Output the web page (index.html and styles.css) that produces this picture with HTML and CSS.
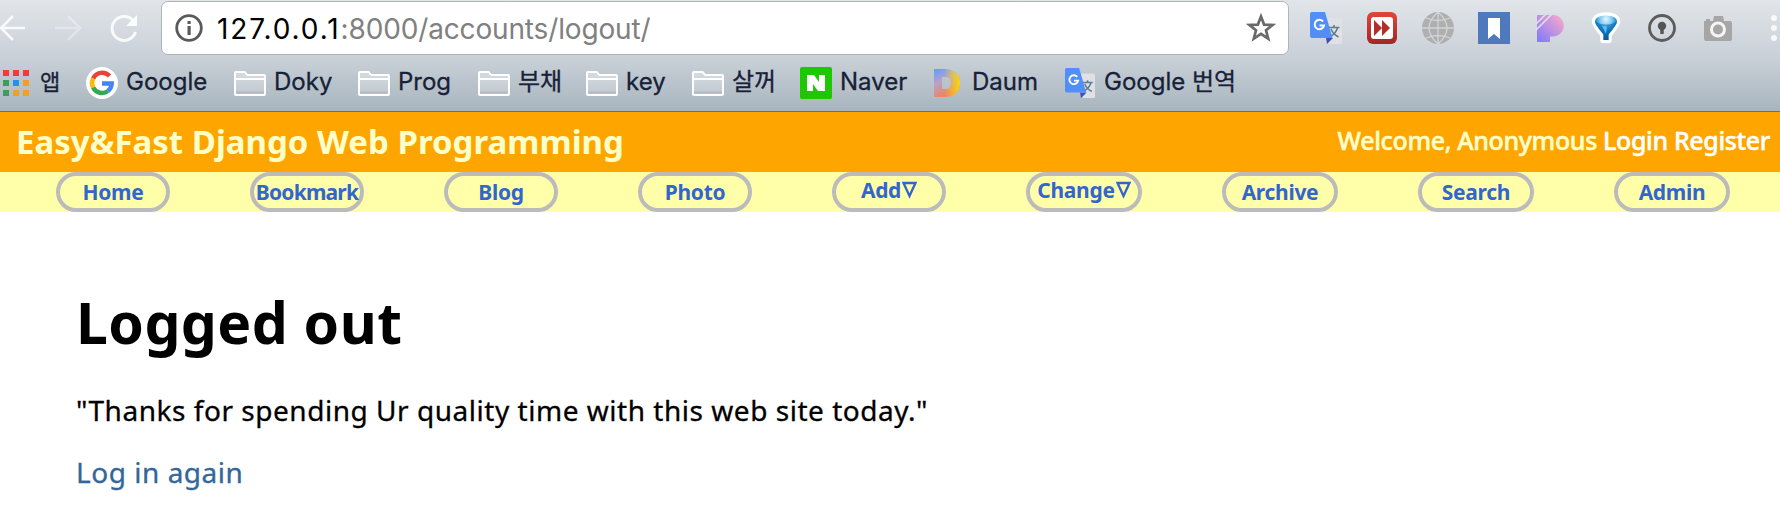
FILE: index.html
```html
<!DOCTYPE html>
<html lang="ko">
<head>
<meta charset="utf-8">
<title>Logged out</title>
<link rel="stylesheet" href="styles.css">
</head>
<body>
<svg class="defs" width="0" height="0">
  <defs>
    <linearGradient id="paper" x1="0" y1="0" x2="0" y2="1"><stop offset="0" stop-color="#d5dbe1"/><stop offset="1" stop-color="#c0c9d0"/></linearGradient>
    <symbol id="folder" viewBox="0 0 32 32"><path d="M1 28V6q0-1 1-1h8q1 0 1.600 1l1 1.500q.4.5 1 .500H30q1 0 1 1V27q0 1-1 1H2q-1 0-1-1z" fill="url(#paper)" stroke="#fff" stroke-width="2"/><path d="M2 12h28" stroke="#fff" stroke-width="2"/><path d="M2 25.500h28" stroke="#b3b9c3" stroke-width="2"/></symbol>
    <symbol id="translate" viewBox="0 0 32 32"><path d="M12 6h18q2 0 2 2v22q0 2-2 2H19z" fill="#dfe1e4"/><path d="M18.500 15.500h11M24 13v2.500M27.500 16q-2 6-8 9M21 17q2 5 7.500 8" fill="none" stroke="#607d8b" stroke-width="1.600"/><path d="M16 26h7l-6 6z" fill="#3f51b5"/><path d="M2 0h13l7.500 26H2q-2 0-2-2V2q0-2 2-2z" fill="#518ef8"/><path d="M13 9.500a4.700 4.700 0 1 0 1 4H9.500" fill="none" stroke="#fff" stroke-width="2"/></symbol>
  </defs>
</svg>
<div class="browser">
  <div class="toolbar">
    <div class="controls">
      <svg width="26" height="28" viewBox="0 0 26 28"><path d="M25 14H1M13 2 1 14l12 12" fill="none" stroke="#fff" stroke-width="2.600" opacity=".85"/></svg>
      <svg width="28" height="28" viewBox="0 0 28 28"><path d="M1 14h24M14 2l12 12-12 12" fill="none" stroke="#fff" stroke-width="2.600" opacity=".3"/></svg>
      <svg width="28" height="28" viewBox="0 0 28 28"><path d="M23.500 7A12 12 0 1 0 25.500 18" fill="none" stroke="#fff" stroke-width="3" opacity=".85"/><path d="M27 1v11H16z" fill="#fff" opacity=".9"/></svg>
    </div>
    <div class="address">
      <svg width="28" height="28" viewBox="0 0 28 28"><circle cx="14" cy="14" r="12.300" fill="none" stroke="#5a5a5a" stroke-width="2.800"/><path d="M12.500 7h3.200v3h-3.200zM12.500 12h3.200v9h-3.200z" fill="#5a5a5a"/></svg>
      <div class="url"><span class="host">127.0.0.1</span><span class="path">:8000/accounts/logout/</span></div>
      <svg class="star" width="30" height="30" viewBox="0 0 30 30"><path d="M15 3.500l3.100 8.100 8.500.4-6.600 5.300 2.200 8.300-7.200-4.700-7.200 4.700 2.200-8.300L3.400 12l8.500-.4z" fill="none" stroke="#6a6a6a" stroke-width="2.700"/></svg>
    </div>
    <div class="extensions">
      <svg viewBox="0 0 32 32"><use href="#translate"/></svg>
      <svg viewBox="0 0 32 32"><defs><linearGradient id="red" x1="0" y1="0" x2="0" y2="1"><stop offset="0" stop-color="#e0473d"/><stop offset="1" stop-color="#a52622"/></linearGradient></defs><rect x="1" y="0" width="30" height="32" rx="6" fill="url(#red)"/><rect x="5" y="5" width="22" height="22" rx="3" fill="#fff"/><path d="M8 8l8 8-8 8zM16 8l8 8-8 8z" fill="#b22e29"/></svg>
      <svg viewBox="0 0 32 32"><circle cx="16" cy="16" r="16" fill="#afafaf"/><path d="M0 16h32M16 0v32M4 6q12 5 24 0M4 26q12-5 24 0M16 0Q-2 16 16 32M16 0q18 16 0 32" fill="none" stroke="#d2d4d6" stroke-width="1.300"/></svg>
      <svg viewBox="0 0 32 32"><rect width="32" height="32" fill="#4f79bd"/><path d="M10 6h12v21l-6-5-6 5z" fill="#fff"/></svg>
      <svg viewBox="0 0 32 32"><defs><linearGradient id="pink" x1="0" y1="1" x2="1" y2="0"><stop offset=".1" stop-color="#8a7df8"/><stop offset="1" stop-color="#ffacc5"/></linearGradient></defs><path d="M3 3h16a10.500 10.500 0 0 1 0 21.500h-3V30H3z" fill="url(#pink)"/><path d="M2 12 12 2M2 18 18 2" stroke="#dfe2e7" stroke-width="1.600"/></svg>
      <svg viewBox="0 0 32 32"><defs><radialGradient id="gem" cx=".5" cy=".15" r=".8"><stop offset="0" stop-color="#e8f8ff"/><stop offset=".35" stop-color="#7cc8f2"/><stop offset=".6" stop-color="#128bd6"/><stop offset="1" stop-color="#064a8a"/></radialGradient></defs><path d="M16 3.500Q5 4 5 9.500q0 3 8.500 13V28h5v-5.500Q27 12.500 27 9.500 27 4 16 3.500z" fill="#fff" stroke="#fff" stroke-width="6.500" stroke-linejoin="round"/><path d="M16 3.500Q5 4 5 9.500q0 3 8.500 13V28h5v-5.500Q27 12.500 27 9.500 27 4 16 3.500z" fill="url(#gem)"/><path d="M5 9.500Q16 16 27 9.500q0 3-8.500 13V28h-5v-5.500Q5 12.500 5 9.500z" fill="#0767ad" opacity=".6"/><path d="M12 13.500q3 1 5 .5l-1 8z" fill="#5cc0f5"/></svg>
      <svg viewBox="0 0 32 32"><circle cx="16" cy="16" r="12.500" fill="none" stroke="#5c5c5c" stroke-width="2.800"/><circle cx="16" cy="14" r="4.200" fill="#555"/><path d="M14.300 14h3.400v8h-3.400z" fill="#555"/></svg>
      <svg viewBox="0 0 32 32"><path d="M2 9h2V7h4v2h3l1-5h9l1 5h6q2 0 2 2v16q0 2-2 2H4q-2 0-2-2z" fill="#a6a6a6"/><circle cx="16" cy="17.500" r="6.500" fill="#a6a6a6" stroke="#f5f5f5" stroke-width="3"/></svg>
      <svg viewBox="0 0 32 32"><g fill="#fff" opacity=".85"><circle cx="16" cy="6" r="3"/><circle cx="16" cy="16" r="3"/><circle cx="16" cy="26" r="3"/></g></svg>
    </div>
  </div>
  <div class="bookmarks">
    <div class="mark apps"><svg viewBox="0 0 32 32"><path d="M0 3h6v6H0zM10 3h6v6h-6zM20 3h6v6h-6z" fill="#f33b36"/><path d="M0 13h6v6H0zM0 23h6v6H0z" fill="#3c9e59"/><path d="M10 13h6v6h-6z" fill="#2b8ef3"/><path d="M20 13h6v6h-6zM10 23h6v6h-6zM20 23h6v6h-6z" fill="#f0a023"/></svg><span>앱</span></div>
    <div class="mark google"><svg viewBox="0 0 32 32"><circle cx="16" cy="16" r="16" fill="#fff"/><g fill="none" stroke-width="4.500"><path d="M23.500 9A10 10 0 0 0 7.100 11.500" stroke="#ea4335"/><path d="M7.100 11.500a10 10 0 0 0 0 9" stroke="#fbbc05"/><path d="M7.100 20.500A10 10 0 0 0 22 24" stroke="#34a853"/><path d="M22 24q3.500-3 3.700-7.500H16" stroke="#4285f4"/></g></svg><span>Google</span></div>
    <div class="mark"><svg viewBox="0 0 32 32"><use href="#folder"/></svg><span>Doky</span></div>
    <div class="mark"><svg viewBox="0 0 32 32"><use href="#folder"/></svg><span>Prog</span></div>
    <div class="mark"><svg viewBox="0 0 32 32"><use href="#folder"/></svg><span>부채</span></div>
    <div class="mark"><svg viewBox="0 0 32 32"><use href="#folder"/></svg><span>key</span></div>
    <div class="mark"><svg viewBox="0 0 32 32"><use href="#folder"/></svg><span>살꺼</span></div>
    <div class="mark"><svg viewBox="0 0 32 32"><rect width="32" height="32" rx="2" fill="#1ec800"/><path d="M7 8h7l5 7V8h6v16h-7l-5-7v7H7z" fill="#fff"/></svg><span>Naver</span></div>
    <div class="mark"><svg viewBox="0 0 32 32"><defs><linearGradient id="daum" x1=".1" y1="0" x2=".6" y2="1"><stop offset="0" stop-color="#669bff"/><stop offset=".4" stop-color="#b5a3c8"/><stop offset="1" stop-color="#ff7a45"/></linearGradient><linearGradient id="yellow"><stop offset=".4" stop-color="#f5d51c" stop-opacity="0"/><stop offset="1" stop-color="#f5d90f"/></linearGradient></defs><path d="M2 2h11q15 1 15 14T13 30H2zM10 10v12h4q5 0 5-6t-5-6z" fill="url(#daum)" fill-rule="evenodd"/><path d="M2 2h11q15 1 15 14T13 30H2zM10 10v12h4q5 0 5-6t-5-6z" fill="url(#yellow)" fill-rule="evenodd"/></svg><span>Daum</span></div>
    <div class="mark last"><svg viewBox="0 0 34 34"><use href="#translate" width="32" height="32" y="1"/></svg><span>Google 번역</span></div>
  </div>
</div>
<header class="site-header">
  <div class="site-title">Easy&amp;Fast Django Web Programming</div>
  <div class="welcome">Welcome, Anonymous <a>Login</a> <a>Register</a></div>
</header>
<nav class="menu">
  <a>Home</a><a class="bookmark">Bookmark</a><a>Blog</a><a>Photo</a><a class="drop">Add<svg width="15" height="18" viewBox="0 0 15 18"><path d="M1.500 2h12l-6 13z" fill="none" stroke="#3366cc" stroke-width="2.400"/></svg></a><a class="wide drop">Change<svg width="15" height="18" viewBox="0 0 15 18"><path d="M1.500 2h12l-6 13z" fill="none" stroke="#3366cc" stroke-width="2.400"/></svg></a><a class="wide">Archive</a><a class="wide">Search</a><a class="wide">Admin</a>
</nav>
<main>
  <h1>Logged out</h1>
  <p class="thanks">"Thanks for spending Ur quality time with this web site today."</p>
  <p class="again"><a>Log in again</a></p>
</main>
</body>
</html>
```
FILE: styles.css
```css
* { box-sizing: border-box; }
body { margin: 0; background: #fff; color: #000; font-family: "Noto Sans", "Noto Sans CJK KR", sans-serif; white-space: nowrap; overflow: hidden; }
svg { display: block; flex: none; }
.defs { position: absolute; }
.browser { height: 112px; border-bottom: 1px solid #64717c; background: linear-gradient(#e1e5e9, #c8cfd7 54%, #a8b5be); font-family: Inter, "Noto Sans CJK KR", sans-serif; }
.toolbar { display: flex; height: 56px; padding-top: 1px; overflow: hidden; }
.controls { display: flex; flex: none; width: 161px; height: 54px; align-items: center; gap: 28px; }
.address { display: flex; flex: none; align-items: center; width: 1128px; height: 54px; padding: 0 12px 0 13px; background: #fff; border: 1px solid #b2b5b8; border-radius: 7px; }
.url { margin-left: 14px; font-size: 28px; line-height: 36px; padding-top: 2px; }
.host { letter-spacing: 1.9px; }
.path { color: #808080; letter-spacing: -0.15px; }
.star { margin-left: auto; }
.extensions { display: flex; flex: none; gap: 24px; margin-left: 21px; padding-top: 11px; }
.extensions svg { width: 32px; height: 32px; }
.bookmarks { display: grid; grid-template-columns: 83px 148px 124px 120px 108px 106px 108px 132px 133px auto; justify-content: start; padding: 8px 0 0 3px; color: #172137; font-size: 24px; }
.mark { display: flex; align-items: center; gap: 8px; height: 38px; }
.mark svg { width: 32px; height: 32px; }
.mark span { line-height: 36px; height: 38px; -webkit-text-stroke: 0.3px #172137; }
.last { gap: 7px; }
.apps { gap: 5px; font-size: 22px; }
.site-header { display: flex; align-items: center; justify-content: space-between; height: 60px; padding: 0 10px 0 16px; background: #ffa500; color: #ffffcc; }
.site-title { font-size: 33px; font-weight: 700; line-height: 60px; }
.welcome { margin-top: -4px; font-size: 25px; font-weight: 500; line-height: 56px; letter-spacing: -0.37px; -webkit-text-stroke: 0.5px; }
.welcome a { color: #fff; }
.menu { display: flex; gap: 80px; height: 40px; padding-left: 56px; background: #ffffaa; }
.menu a { display: flex; justify-content: center; width: 114px; height: 40px; border: 4px solid #bbb; border-radius: 20px; color: #3366cc; font-size: 21px; font-weight: 700; line-height: 32px; letter-spacing: -0.3px; }
.menu .wide { width: 116px; }
.menu .bookmark { letter-spacing: -0.8px; }
.menu .drop { line-height: 28px; }
.menu svg { margin: 5px 0 0 1px; }
main { padding: 68px 0 0 76px; }
h1 { margin: 0; font-size: 57px; font-weight: 700; line-height: 84px; letter-spacing: 0.45px; }
p { margin: 0; font-size: 28px; line-height: 62px; letter-spacing: 0.53px; -webkit-text-stroke: 0.3px; }
.thanks { padding-top: 15px; }
.again a { color: #336699; }
```
